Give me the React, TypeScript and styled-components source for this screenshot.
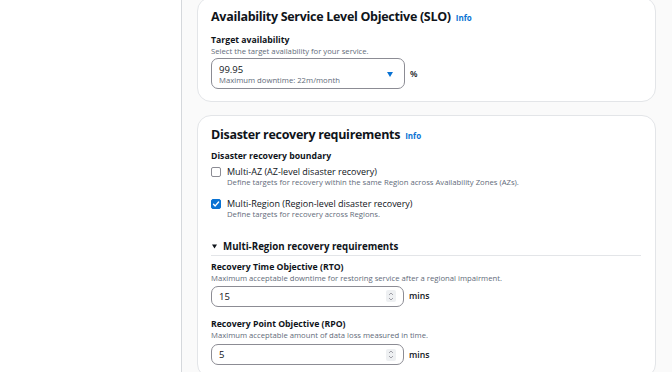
import styled, { createGlobalStyle } from 'styled-components';

const GlobalStyle = createGlobalStyle`
  body {
    margin: 0;
    font-family: "Open Sans", "Noto Sans", sans-serif;
    color: #0f141a;
  }
`;

const Page = styled.div`
  display: flex;
  height: 372px;
  overflow: hidden;
`;

const SideNav = styled.nav`
  width: 181px;
  flex-shrink: 0;
  background: #fff;
  border-right: 1px solid #d5d8dc;
`;

const Main = styled.main`
  flex: 1;
  background: #fafafa;
  padding: 0 16px 0 15px;
`;

const Stack = styled.div`
  display: flex;
  flex-direction: column;
  gap: 13px;
  margin-top: -3px;
`;

const Card = styled.section`
  background: #fff;
  border: 1px solid #e3e5e8;
  border-radius: 14px;
  padding: 9px 14px 12px 13px;
`;

const Title = styled.h2`
  margin: 0;
  font-size: 12.5px;
  line-height: 20px;
  font-weight: 700;
  letter-spacing: -0.3px;
  display: flex;
  align-items: baseline;
  gap: 5px;
`;

const Info = styled.a`
  font-size: 8px;
  font-weight: 700;
  letter-spacing: 0;
  color: #0972d3;
`;

const Label = styled.div<{ $top?: number }>`
  margin-top: ${(p) => p.$top ?? 0}px;
  font-size: 8.7px;
  line-height: 11px;
  font-weight: 700;
`;

const Desc = styled.div`
  font-size: 7.7px;
  line-height: 11px;
  color: #5f6b7a;
`;

const FieldRow = styled.div<{ $top?: number }>`
  display: flex;
  align-items: center;
  gap: 5px;
  margin-top: ${(p) => p.$top ?? 0}px;
`;

const SelectBox = styled.div`
  width: 194px;
  height: 31px;
  box-sizing: border-box;
  border: 1px solid #8c8c94;
  border-radius: 7px;
  padding: 2px 11px 0 7px;
  display: flex;
  align-items: center;
  justify-content: space-between;
`;

const SelectValue = styled.div`
  font-size: 9.5px;
  line-height: 11px;
  display: flex;
  flex-direction: column;
`;

const InputBox = styled.div`
  width: 193px;
  height: 21px;
  box-sizing: border-box;
  border: 1px solid #8c8c94;
  border-radius: 7px;
  padding: 0 7px;
  display: flex;
  align-items: center;
  justify-content: space-between;
  font-size: 9.5px;
`;

const Spinner = styled.span`
  width: 10px;
  height: 12px;
  border-radius: 2px;
  background: #eef0f2;
  display: flex;
  align-items: center;
  justify-content: center;
`;

const Unit = styled.span`
  font-size: 8.7px;
  font-weight: 600;
`;

const CheckRow = styled.label<{ $top?: number }>`
  display: flex;
  gap: 6px;
  margin-top: ${(p) => p.$top ?? 0}px;
`;

const Box = styled.span<{ $checked?: boolean }>`
  width: 10px;
  height: 10px;
  margin-top: 1px;
  flex-shrink: 0;
  box-sizing: border-box;
  border-radius: 2px;
  border: 1px solid ${(p) => (p.$checked ? '#0972d3' : '#8c8c94')};
  background: ${(p) => (p.$checked ? '#0972d3' : '#fff')};
  display: flex;
  align-items: center;
  justify-content: center;
`;

const CheckText = styled.div`
  font-size: 9px;
  line-height: 11px;
`;

const SubHeading = styled.div`
  margin-top: 19px;
  display: flex;
  align-items: center;
  gap: 6px;
  padding-left: 1px;
  font-size: 9.7px;
  font-weight: 700;
  line-height: 15px;
  padding-bottom: 1px;
  border-bottom: 1px solid #e3e5e8;
`;

const Caret = () => (
  <svg width="6" height="5" viewBox="0 0 6 5">
    <path d="M0 0h6L3 5z" fill="#0972d3" />
  </svg>
);

const Tri = () => (
  <svg width="5" height="5" viewBox="0 0 5 5">
    <path d="M0 0.5h5L2.5 4.5z" fill="#0f141a" />
  </svg>
);

const Check = () => (
  <svg width="8" height="8" viewBox="0 0 8 8">
    <path d="M1.5 4.2l1.7 1.7L6.6 2" stroke="#fff" strokeWidth="1.4" fill="none" strokeLinecap="round" strokeLinejoin="round" />
  </svg>
);

const Arrows = () => (
  <svg width="6" height="9" viewBox="0 0 6 9">
    <path d="M1 3l2-2 2 2M1 6l2 2 2-2" stroke="#8c8c94" strokeWidth="0.8" fill="none" />
  </svg>
);

const NumberField = ({ value, top }: { value: string; top: number }) => (
  <FieldRow $top={top}>
    <InputBox>
      <span>{value}</span>
      <Spinner>
        <Arrows />
      </Spinner>
    </InputBox>
    <Unit>mins</Unit>
  </FieldRow>
);

const App = () => (
  <>
    <GlobalStyle />
    <Page>
      <SideNav />
      <Main>
        <Stack>
          <Card>
            <Title>
              Availability Service Level Objective (SLO) <Info>Info</Info>
            </Title>
            <Label $top={7}>Target availability</Label>
            <Desc>Select the target availability for your service.</Desc>
            <FieldRow $top={1}>
              <SelectBox>
                <SelectValue>
                  <span>99.95</span>
                  <Desc>Maximum downtime: 22m/month</Desc>
                </SelectValue>
                <Caret />
              </SelectBox>
              <Unit>%</Unit>
            </FieldRow>
          </Card>
          <Card>
            <Title>
              Disaster recovery requirements <Info>Info</Info>
            </Title>
            <Label $top={5}>Disaster recovery boundary</Label>
            <CheckRow $top={4}>
              <Box />
              <div>
                <CheckText>Multi-AZ (AZ-level disaster recovery)</CheckText>
                <Desc>Define targets for recovery within the same Region across Availability Zones (AZs).</Desc>
              </div>
            </CheckRow>
            <CheckRow $top={10}>
              <Box $checked>
                <Check />
              </Box>
              <div>
                <CheckText>Multi-Region (Region-level disaster recovery)</CheckText>
                <Desc>Define targets for recovery across Regions.</Desc>
              </div>
            </CheckRow>
            <SubHeading>
              <Tri />
              Multi-Region recovery requirements
            </SubHeading>
            <Label $top={6}>Recovery Time Objective (RTO)</Label>
            <Desc>Maximum acceptable downtime for restoring service after a regional impairment.</Desc>
            <NumberField value="15" top={1.5} />
            <Label $top={12}>Recovery Point Objective (RPO)</Label>
            <Desc>Maximum acceptable amount of data loss measured in time.</Desc>
            <NumberField value="5" top={3.5} />
          </Card>
        </Stack>
      </Main>
    </Page>
  </>
);

export default App;
